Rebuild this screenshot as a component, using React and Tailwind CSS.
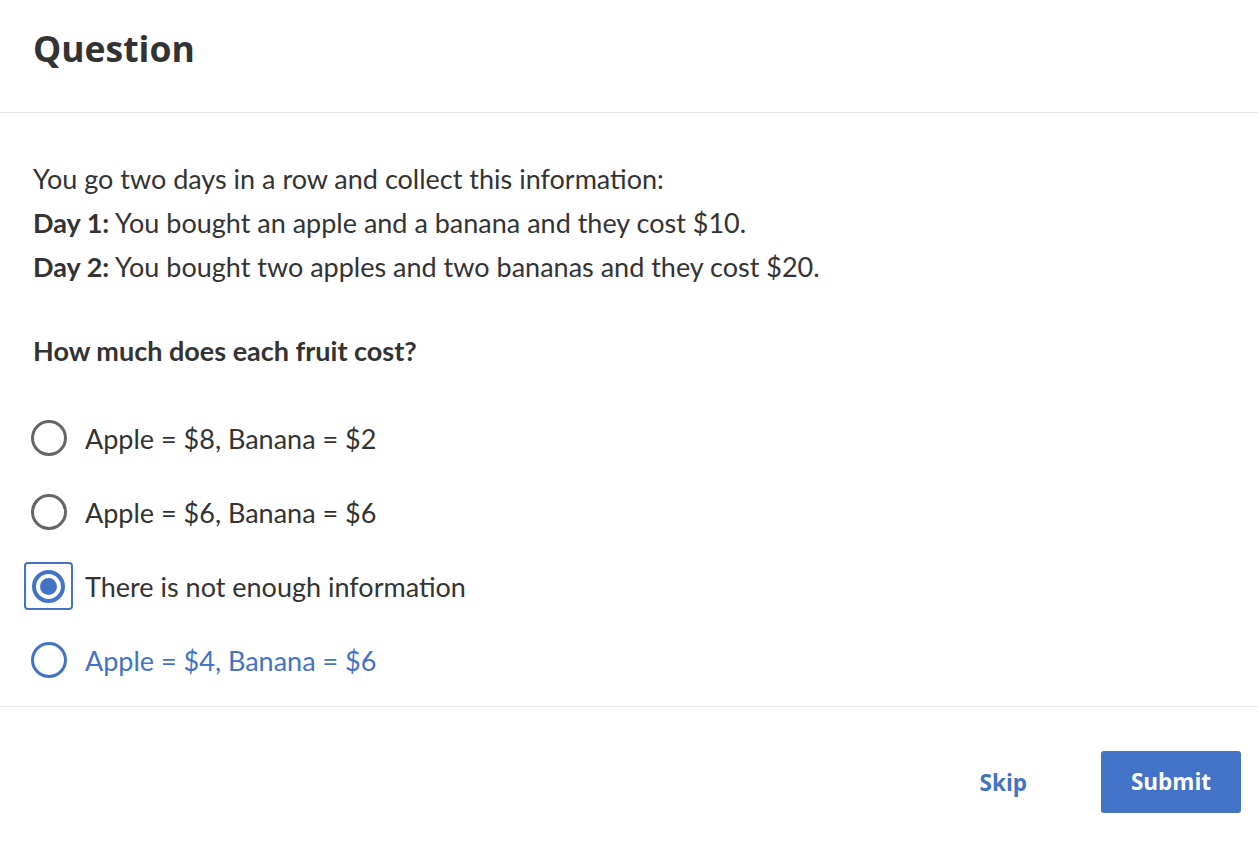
import { useState } from 'react';

const options = [
  { id: 'a', label: 'Apple = $8, Banana = $2' },
  { id: 'b', label: 'Apple = $6, Banana = $6' },
  { id: 'c', label: 'There is not enough information' },
  { id: 'd', label: 'Apple = $4, Banana = $6' },
];

const RadioOption = ({ option, selected, hovered, onSelect }) => {
  return (
    <label
      className="flex items-center h-[74px] cursor-pointer"
      onClick={() => onSelect(option.id)}
    >
      <span
        className={`flex items-center justify-center w-[49px] h-[48px] -ml-[9px] mr-[12px] rounded-[4px] border-2 ${
          selected ? 'border-[#4373c6]' : 'border-transparent'
        }`}
      >
        {selected ? (
          <span className="flex items-center justify-center w-[33px] h-[33px] rounded-full border-[4px] border-[#4373c6]">
            <span className="w-[17px] h-[17px] rounded-full bg-[#4373c6]" />
          </span>
        ) : (
          <span
            className={`w-[36px] h-[36px] rounded-full border-[3px] ${
              hovered ? 'border-[#4373c6]' : 'border-[#666666]'
            }`}
          />
        )}
      </span>
      <span
        className={`text-[27px] leading-none ${hovered ? 'text-[#4373c6]' : 'text-[#333333]'}`}
      >
        {option.label}
      </span>
    </label>
  );
};

export default function App() {
  const [selected, setSelected] = useState('c');

  return (
    <div
      className="w-[1258px] h-[844px] bg-white text-[#333333] flex flex-col"
      style={{ fontFamily: '"Lato", "Noto Sans", sans-serif' }}
    >
      {/* Header */}
      <div className="h-[113px] border-b border-[#e6e6e6] px-[33px] flex items-center">
        <h1
          className="text-[35.5px] font-bold -mt-[14px]"
          style={{ fontFamily: '"Open Sans", sans-serif' }}
        >
          Question
        </h1>
      </div>

      {/* Body */}
      <div className="flex-1 px-[33px] pt-[44px]">
        <div className="text-[27px] leading-[44px]">
          <p>You go two days in a row and collect this information:</p>
          <p>
            <b>Day 1:</b> You bought an apple and a banana and they cost $10.
          </p>
          <p>
            <b>Day 2:</b> You bought two apples and two bananas and they cost $20.
          </p>
        </div>

        <p className="text-[27px] font-bold leading-[44px] mt-[40px]">
          How much does each fruit cost?
        </p>

        <div className="mt-[28px]">
          {options.map((option) => (
            <RadioOption
              key={option.id}
              option={option}
              selected={selected === option.id}
              hovered={option.id === 'd'}
              onSelect={setSelected}
            />
          ))}
        </div>
      </div>

      {/* Footer */}
      <div
        className="h-[138px] border-t border-[#e6e6e6] flex items-center justify-end pr-[17px] pt-[13px]"
        style={{ fontFamily: '"Open Sans", sans-serif' }}
      >
        <button className="text-[#4373c6] text-[22.5px] font-bold px-[20px] mr-[54px] mt-[2px]">
          Skip
        </button>
        <button className="w-[140px] h-[62px] rounded-[3px] bg-[#4373c6] text-white text-[22.5px] font-bold">
          Submit
        </button>
      </div>
    </div>
  );
}
